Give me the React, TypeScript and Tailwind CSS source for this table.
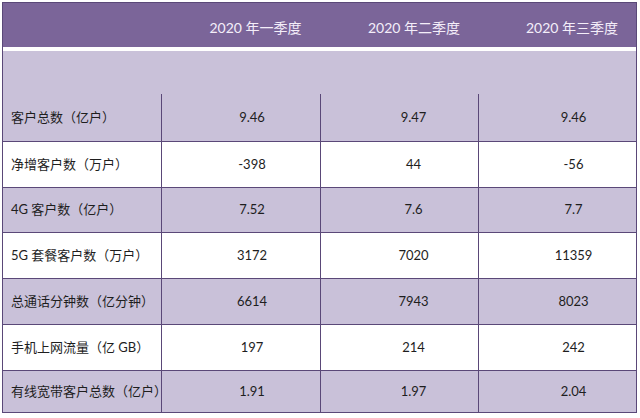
import React from "react";

const rows: [string, string, string, string][] = [
  ["客户总数（亿户）", "9.46", "9.47", "9.46"],
  ["净增客户数（万户）", "-398", "44", "-56"],
  ["4G 客户数（亿户）", "7.52", "7.6", "7.7"],
  ["5G 套餐客户数（万户）", "3172", "7020", "11359"],
  ["总通话分钟数（亿分钟）", "6614", "7943", "8023"],
  ["手机上网流量（亿 GB）", "197", "214", "242"],
  ["有线宽带客户总数（亿户）", "1.91", "1.97", "2.04"],
];
const heights = ["h-[47px]", "h-[46px]", "h-[45px]", "h-[46px]", "h-[46px]", "h-[46px]", "h-[43px]"];

const font = { fontFamily: '"Lato", "Noto Sans CJK SC", sans-serif' };

export default function App() {
  return (
    <div className="w-[640px] h-[418px] bg-white pt-[2px] pl-[2px]" style={font}>
      <div className="w-[635px] border-l border-r border-t border-[#5a4878]">
        <div className="grid grid-cols-[158px_159px_158px_158px] h-[44px] bg-[#7b6599] text-[14px] text-[#f4eef9]">
          <div />
          <div className="flex items-center justify-center pl-[30px] pt-[4px]">2020 年一季度</div>
          <div className="flex items-center justify-center pl-[30px] pt-[4px]">2020 年二季度</div>
          <div className="flex items-center justify-center pl-[30px] pt-[4px]">2020 年三季度</div>
        </div>
        <div className="h-[4px] bg-white" />
        <div className="h-[43px] bg-[#c9c1d9]" />
        {rows.map((r, i) => (
          <div
            key={i}
            className={`grid grid-cols-[158px_159px_158px_158px] ${heights[i]} ${i % 2 === 0 ? "bg-[#c9c1d9]" : "bg-white"} ${i > 0 ? "border-t border-[#5a4878]" : ""} ${i === rows.length - 1 ? "border-b" : ""} text-[13px] text-[#1e1e1e]`}
          >
            <div className="flex items-center pl-[8px] whitespace-nowrap">{r[0]}</div>
            <div className="flex items-center justify-center pl-[22px] border-l border-[#5a4878]">{r[1]}</div>
            <div className="flex items-center justify-center pl-[28px] border-l border-[#5a4878]">{r[2]}</div>
            <div className="flex items-center justify-center pl-[32px] border-l border-[#5a4878]">{r[3]}</div>
          </div>
        ))}
      </div>
    </div>
  );
}
